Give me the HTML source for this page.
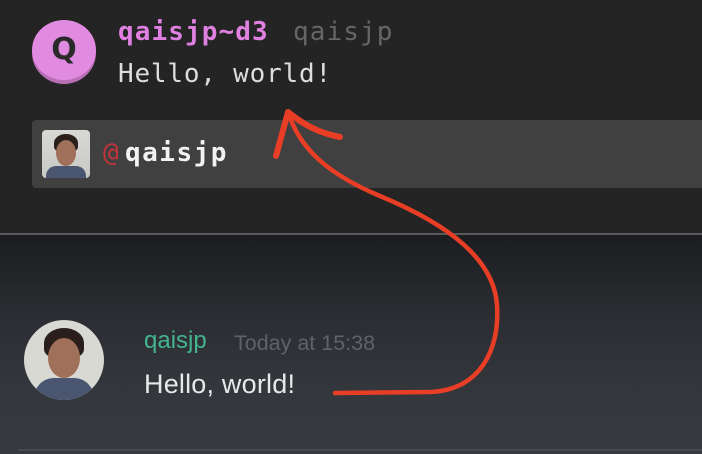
<!DOCTYPE html>
<html><head><style>
html,body{margin:0;padding:0;}
body{width:702px;height:454px;position:relative;overflow:hidden;background:#242424;font-family:"Liberation Sans",sans-serif;}
.top{position:absolute;left:0;top:0;width:702px;height:234px;background:#242424;}
.sep{position:absolute;left:0;top:233px;width:702px;height:2px;background:#5a5a5a;}
.bot{position:absolute;left:0;top:235px;width:702px;height:219px;background:linear-gradient(#1c1d20 0px,#2b2d32 80px,#34373c 160px,#36393f);}
.mono{font-family:"DejaVu Sans Mono","Liberation Mono",monospace;}
.qav{position:absolute;left:32px;top:22px;width:64px;height:62px;border-radius:50%;background:#b86fb5;}
.qav2{position:absolute;left:32px;top:20px;width:64px;height:60px;border-radius:50%;background:#e08ae0;color:#2a2a2a;font:bold 30px "DejaVu Sans",sans-serif;text-align:center;line-height:60px;}
.name1{position:absolute;left:118px;top:17px;font-size:26px;font-weight:bold;color:#e080e0;letter-spacing:1.1px;}
.user1{position:absolute;left:293px;top:17px;font-size:26px;color:#666;letter-spacing:1.1px;}
.msg1{position:absolute;left:118px;top:59px;font-size:26px;color:#ddd;letter-spacing:0.8px;}
.emb{position:absolute;left:32px;top:120px;width:670px;height:68px;background:#404040;border-radius:4px 0 0 4px;}
.ph{position:absolute;border-radius:4px;overflow:hidden;background:linear-gradient(#d8d8d4,#c8c8c4);}
.face{position:absolute;border-radius:50%;background:#a0705a;}
.hair{position:absolute;background:#2a1f1a;border-radius:50% 50% 30% 30%;}
.shirt{position:absolute;background:#4a5670;}
.at{position:absolute;left:103px;top:138px;font-size:26px;color:#c0343a;}
.qn{position:absolute;left:125px;top:138px;font-size:26px;font-weight:bold;color:#f2f2f2;letter-spacing:1.5px;}
.av2{position:absolute;left:24px;top:320px;width:80px;height:80px;border-radius:50%;overflow:hidden;background:#d9d9d4;}
.name2{position:absolute;left:144px;top:327px;font-size:24px;color:#43b58c;}
.time{position:absolute;left:234px;top:331px;font-size:21.5px;color:#5f6268;}
.msg2{position:absolute;left:144px;top:369px;font-size:27px;color:#e8e8e8;letter-spacing:0.2px;}
.bl{position:absolute;left:18px;top:449px;width:684px;height:2px;background:#45484e;}
</style></head><body>
<div class="top"></div>
<div class="sep"></div>
<div class="bot"></div>
<div class="qav"></div><div class="qav2">Q</div>
<div class="name1 mono">qaisjp~d3</div>
<div class="user1 mono">qaisjp</div>
<div class="msg1 mono">Hello, world!</div>
<div class="emb"></div>
<div class="ph" style="left:42px;top:130px;width:48px;height:48px;">
 <div class="hair" style="left:12px;top:4px;width:24px;height:18px;"></div>
 <div class="face" style="left:14px;top:10px;width:20px;height:26px;"></div>
 <div class="shirt" style="left:4px;top:36px;width:40px;height:14px;border-radius:10px 10px 0 0;"></div>
</div>
<div class="at mono">@</div>
<div class="qn mono">qaisjp</div>
<div class="av2">
 <div class="hair" style="left:20px;top:8px;width:40px;height:30px;"></div>
 <div class="face" style="left:24px;top:18px;width:32px;height:40px;"></div>
 <div class="shirt" style="left:10px;top:58px;width:60px;height:24px;border-radius:20px 20px 0 0;"></div>
</div>
<div class="name2">qaisjp</div>
<div class="time">Today at 15:38</div>
<div class="msg2">Hello, world!</div>
<div class="bl"></div>
<svg style="position:absolute;left:0;top:0" width="702" height="454">
<path d="M335,393 L430,392 C480,390 500,350 497,305 C494,260 450,225 380,196 C330,175 300,150 288,112" fill="none" stroke="#e83e26" stroke-width="4.5" stroke-linecap="round"/>
<path d="M276,156 L288,112 C305,126 320,133 340,137" fill="none" stroke="#e83e26" stroke-width="6" stroke-linecap="round" stroke-linejoin="round"/>
</svg>
</body></html>
